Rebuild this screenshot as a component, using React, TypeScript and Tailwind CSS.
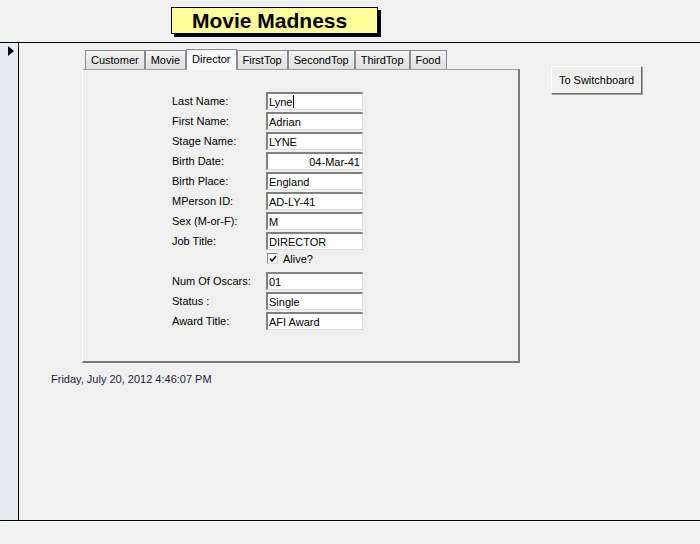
import React from "react";

const tabs = ["Customer", "Movie", "Director", "FirstTop", "SecondTop", "ThirdTop", "Food"];

const fields: { label: string; value: string; right?: boolean; caret?: boolean }[] = [
  { label: "Last Name:", value: "Lyne", caret: true },
  { label: "First Name:", value: "Adrian" },
  { label: "Stage Name:", value: "LYNE" },
  { label: "Birth Date:", value: "04-Mar-41", right: true },
  { label: "Birth Place:", value: "England" },
  { label: "MPerson ID:", value: "AD-LY-41" },
  { label: "Sex (M-or-F):", value: "M" },
  { label: "Job Title:", value: "DIRECTOR" },
];

const fields2 = [
  { label: "Num Of Oscars:", value: "01" },
  { label: "Status :", value: "Single" },
  { label: "Award Title:", value: "AFI Award" },
];

function Field({ label, value, right, caret }: { label: string; value: string; right?: boolean; caret?: boolean }) {
  return (
    <div className="flex h-[20px] items-start">
      <div className="w-[94px] pt-[2px] leading-[14px]">{label}</div>
      <div
        className={`flex h-[18px] w-[97px] items-center border-t-2 border-l-2 border-r border-b border-t-[#808080] border-l-[#808080] border-r-[#dcdcdc] border-b-[#dcdcdc] bg-white px-[1px] leading-[14px] ${
          right ? "justify-end pr-[2px]" : ""
        }`}
      >
        <span>{value}</span>
        {caret && <span className="ml-[1px] inline-block h-[13px] w-[1px] bg-black" />}
      </div>
    </div>
  );
}

export default function App() {
  return (
    <div
      className="flex h-[544px] w-[700px] flex-col bg-[#f0f0f0] text-[11px] text-black"
      style={{ fontFamily: '"Liberation Sans", Arial, sans-serif' }}
    >
      {/* Header with title */}
      <div className="h-[42px] shrink-0 pl-[171px] pt-[7px]">
        <div className="flex h-[27px] w-[207px] items-center border border-black bg-[#ffff99] pl-[20px] text-[21px] font-bold leading-none shadow-[3px_3px_0_#000]">
          Movie Madness
        </div>
      </div>

      {/* Form body */}
      <div className="flex h-[479px] shrink-0 border-y border-black">
        <div className="w-[19px] shrink-0 border-r border-black bg-[#e9edf2] pl-[8px] pt-[3px]">
          <svg width="6" height="10" viewBox="0 0 6 10">
            <path d="M0 0 L6 5 L0 10 Z" fill="#000" />
          </svg>
        </div>

        <div className="flex-1 pl-[63px] pt-[5px]">
          <div className="flex">
            <div className="w-[438px]">
              {/* Tab strip */}
              <div className="flex h-[21px] items-end pl-[3px]">
                {tabs.map((t) =>
                  t === "Director" ? (
                    <div
                      key={t}
                      className="relative z-10 -mb-[1px] flex h-[21px] items-center border border-b-0 border-[#898c95] bg-[#f9f9f9] px-[5px] pb-[2px]"
                    >
                      {t}
                    </div>
                  ) : (
                    <div
                      key={t}
                      className="flex h-[19px] items-center border border-b-0 border-[#898c95] bg-gradient-to-b from-[#f4f4f4] to-[#dedede] px-[5px] pt-[1px]"
                    >
                      {t}
                    </div>
                  )
                )}
              </div>

              {/* Tab page */}
              <div className="h-[294px] border-t border-l border-r-2 border-b-2 border-t-[#a0a0a0] border-l-white border-r-[#7a7a7a] border-b-[#7a7a7a] pl-[89px] pt-[22px]">
                {fields.map((f) => (
                  <Field key={f.label} {...f} />
                ))}
                <div className="flex h-[20px] items-start pl-[95px] pt-[1px]">
                  <div className="flex h-[11px] w-[11px] items-center justify-center border border-t-[#808080] border-l-[#808080] border-r-[#dcdcdc] border-b-[#dcdcdc] bg-white">
                    <svg width="8" height="8" viewBox="0 0 8 8">
                      <path d="M1 3.5 L3 6 L7 1" stroke="#000" strokeWidth="1.6" fill="none" />
                    </svg>
                  </div>
                  <span className="ml-[5px] leading-[12px]">Alive?</span>
                </div>
                {fields2.map((f) => (
                  <Field key={f.label} {...f} />
                ))}
              </div>
            </div>

            <div className="ml-[31px] pt-[18px]">
              <button className="flex h-[28px] w-[91px] items-center justify-center border border-t-white border-l-white border-r-[#696969] border-b-[#696969] bg-[#f0f0f0] shadow-[1px_1px_0_#a0a0a0] text-[11px]">
                To Switchboard
              </button>
            </div>
          </div>

          <div className="-ml-[31px] pt-[8px] text-[#1c1c48]">Friday, July 20, 2012 4:46:07 PM</div>
        </div>
      </div>

      <div className="flex-1 bg-[#f2f2f2]" />
    </div>
  );
}
